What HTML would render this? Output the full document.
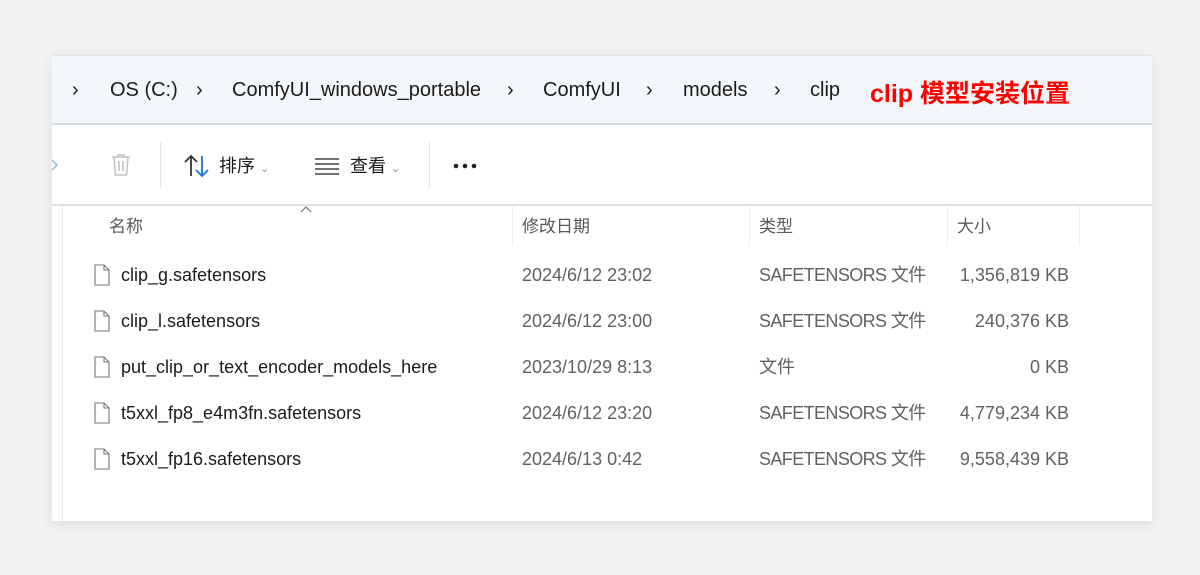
<!DOCTYPE html>
<html><head><meta charset="utf-8"><style>
body{margin:0;width:1200px;height:575px;background:#f2f2f2;position:relative;overflow:hidden;font-family:"Liberation Sans","Noto Sans CJK SC",sans-serif;color:#1b1b1b}
.win{position:absolute;left:52px;top:55px;width:1100px;height:466px;background:#fff;box-shadow:0 4px 14px rgba(0,0,0,.08)}
.bc{position:absolute;left:0;top:0;width:1100px;height:67px;background:#f4f7f9;border-top:1px solid #dfe6ea;border-bottom:2px solid #d5dee3}
.bc span{position:absolute;top:23px;font-size:20px;color:#1b1b1b}
.t{position:absolute;font-size:18px;color:#1b1b1b;line-height:24px}
.sep{position:absolute;top:142px;width:1px;height:46px;background:#e3e3e3;z-index:2}
.h{position:absolute;font-size:17px;color:#5a5a5a;line-height:24px}
.c{position:absolute;top:0;font-size:18px;color:#1b1b1b;line-height:24px;white-space:nowrap}
.g{color:#616161}
.s{letter-spacing:-0.6px}
.csep{position:absolute;width:1px;height:40px;background:#eee}
.r{position:absolute;left:0;width:1200px;height:24px}.ic{position:absolute;left:94px;top:1px}
</style></head><body>
<div class="win">
<div class="bc">
<span style="left:20px">›</span>
<span style="left:58px">OS (C:)</span>
<span style="left:144px">›</span>
<span style="left:180px">ComfyUI_windows_portable</span>
<span style="left:455px">›</span>
<span style="left:491px">ComfyUI</span>
<span style="left:594px">›</span>
<span style="left:631px">models</span>
<span style="left:722px">›</span>
<span style="left:758px">clip</span>
<span style="left:818px;top:18px;color:#f00;font-weight:bold;font-size:25px">clip 模型安装位置</span>
</div>
</div>
<div class="sep" style="left:160px"></div>
<div class="sep" style="left:429px"></div>
<svg style="position:absolute;left:52px;top:156px" width="8" height="20" fill="none" stroke="#8ab4e0" stroke-width="1.4"><path d="M0 4l5 5-5 5"/></svg>
<svg style="position:absolute;left:108px;top:152px" width="26" height="26" viewBox="0 0 26 26" fill="none" stroke="#c3c3c3" stroke-width="1.6"><path d="M4 5h18M10 5V3h6v2M6 5l1.5 18h11L20 5M11 9v10M15 9v10"/></svg>
<svg style="position:absolute;left:183px;top:154px" width="28" height="24" viewBox="0 0 28 24" fill="none" stroke-width="1.8"><path d="M8 22V2M2 8l6-6 6 6" stroke="#333"/><path d="M19 2v20M13 16l6 6 6-6" stroke="#1a73d9"/></svg>
<div class="t" style="left:219px;top:154px">排序 <span style="font-size:11px;color:#888">⌄</span></div>
<svg style="position:absolute;left:315px;top:157px" width="24" height="18" fill="none" stroke="#444" stroke-width="1.5"><path d="M0 2h24M0 7h24M0 12h24M0 17h24"/></svg>
<div class="t" style="left:350px;top:154px">查看 <span style="font-size:11px;color:#888">⌄</span></div>
<svg style="position:absolute;left:453px;top:162px" width="26" height="8"><circle cx="3" cy="4" r="2.3" fill="#222"/><circle cx="12" cy="4" r="2.3" fill="#222"/><circle cx="21" cy="4" r="2.3" fill="#222"/></svg>
<div style="position:absolute;left:52px;top:206px;width:1100px;height:315px;background:#fff"></div>
<div style="position:absolute;left:62px;top:206px;width:1px;height:315px;background:#e8e8e8"></div>
<div style="position:absolute;left:52px;top:204px;width:1100px;height:2px;background:#dbe2e6"></div>
<svg style="position:absolute;left:300px;top:206px" width="12" height="7" fill="none" stroke="#777" stroke-width="1.2"><path d="M1 6l5-5 5 5"/></svg>
<div class="csep" style="left:512px;top:206px"></div><div class="csep" style="left:749px;top:206px"></div><div class="csep" style="left:947px;top:206px"></div><div class="csep" style="left:1079px;top:206px"></div>
<div class="h" style="left:109px;top:215px">名称</div>
<div class="h" style="left:522px;top:215px">修改日期</div>
<div class="h" style="left:759px;top:215px">类型</div>
<div class="h" style="left:957px;top:215px">大小</div>
<div class="r" style="top:263px"><svg class="ic" width="16" height="22" fill="none" stroke="#777" stroke-width="1.1"><path d="M1 1h9l5 5v15H1z M10 1v5h5"/></svg><div class="c" style="left:121px">clip_g.safetensors</div><div class="c g" style="left:522px">2024/6/12 23:02</div><div class="c g s" style="left:759px">SAFETENSORS 文件</div><div class="c g" style="right:131px">1,356,819 KB</div></div>
<div class="r" style="top:309px"><svg class="ic" width="16" height="22" fill="none" stroke="#777" stroke-width="1.1"><path d="M1 1h9l5 5v15H1z M10 1v5h5"/></svg><div class="c" style="left:121px">clip_l.safetensors</div><div class="c g" style="left:522px">2024/6/12 23:00</div><div class="c g s" style="left:759px">SAFETENSORS 文件</div><div class="c g" style="right:131px">240,376 KB</div></div>
<div class="r" style="top:355px"><svg class="ic" width="16" height="22" fill="none" stroke="#777" stroke-width="1.1"><path d="M1 1h9l5 5v15H1z M10 1v5h5"/></svg><div class="c" style="left:121px">put_clip_or_text_encoder_models_here</div><div class="c g" style="left:522px">2023/10/29 8:13</div><div class="c g" style="left:759px">文件</div><div class="c g" style="right:131px">0 KB</div></div>
<div class="r" style="top:401px"><svg class="ic" width="16" height="22" fill="none" stroke="#777" stroke-width="1.1"><path d="M1 1h9l5 5v15H1z M10 1v5h5"/></svg><div class="c" style="left:121px">t5xxl_fp8_e4m3fn.safetensors</div><div class="c g" style="left:522px">2024/6/12 23:20</div><div class="c g s" style="left:759px">SAFETENSORS 文件</div><div class="c g" style="right:131px">4,779,234 KB</div></div>
<div class="r" style="top:447px"><svg class="ic" width="16" height="22" fill="none" stroke="#777" stroke-width="1.1"><path d="M1 1h9l5 5v15H1z M10 1v5h5"/></svg><div class="c" style="left:121px">t5xxl_fp16.safetensors</div><div class="c g" style="left:522px">2024/6/13 0:42</div><div class="c g s" style="left:759px">SAFETENSORS 文件</div><div class="c g" style="right:131px">9,558,439 KB</div></div>
</body></html>
